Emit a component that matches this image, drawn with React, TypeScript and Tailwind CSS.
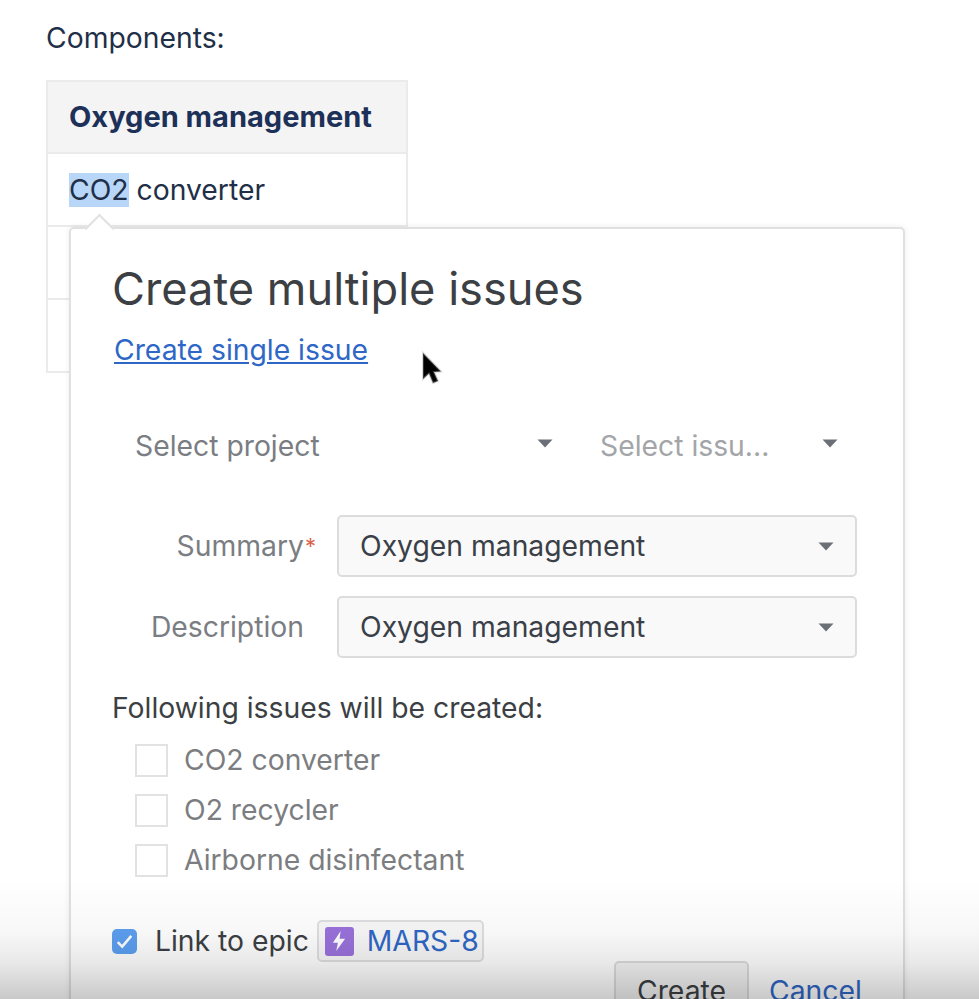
const font = { fontFamily: "Inter, Roboto, 'Noto Sans', sans-serif" };

function Caret({ color = "#6b6f76", lift }: { color?: string; lift?: boolean }) {
  return (
    <svg width="16" height="9" viewBox="0 0 16 9" className={lift ? "shrink-0 -mt-[5px]" : "shrink-0"}>
      <path d="M0.5 0.5H15.5L8 8.5Z" fill={color} />
    </svg>
  );
}

function MappedSelect({ label, star, pad }: { label: string; star?: boolean; pad: string }) {
  return (
    <div className="flex h-[62px] items-center">
      <div className={`w-[266px] shrink-0 text-right text-[#7a7d82] ${pad}`}>
        {label}
        {star && <span className="ml-[1px] text-[22px] align-top text-[#d9664f]">*</span>}
      </div>
      <div className="flex h-[62px] w-[520px] items-center justify-between rounded-[5px] border-2 border-[#dcdcdc] bg-[#f9f9f9] pl-[21px] pr-[21px] text-[#3a4048]">
        <span>Oxygen management</span>
        <Caret />
      </div>
    </div>
  );
}

function Issue({ text }: { text: string }) {
  return (
    <div className="flex h-[50px] items-center gap-[16px] text-[#7b7d80]">
      <span className="h-[33px] w-[33px] border-2 border-[#e2e2e2] bg-white" />
      <span>{text}</span>
    </div>
  );
}

export default function App() {
  return (
    <div style={font} className="relative h-[999px] w-[979px] overflow-hidden bg-white text-[28.3px] leading-[34px] text-[#22304a]">
      <div className="pl-[46px] pt-[21px] text-[#1f2f48]">Components:</div>
      <div className="ml-[46px] mt-[25px] w-[362px] border-2 border-[#ebebeb]">
        <div className="flex h-[72px] items-center border-b-2 border-[#ebebeb] bg-[#f4f4f4] pl-[21px] text-[29px] font-bold text-[#1d3058]">
          Oxygen management
        </div>
        <div className="flex h-[73px] items-center border-b-2 border-[#ebebeb] pl-[21px] text-[#1f2f48]">
          <span className="bg-[#b8d6f8]">CO2</span>&nbsp;converter
        </div>
        <div className="h-[73px] border-b-2 border-[#ebebeb]" />
        <div className="h-[71px]" />
      </div>

      <div className="absolute left-[69px] top-[227px] h-[800px] w-[836px] rounded-[5px] border-2 border-[#e0e0e0] bg-white pl-[41px] shadow-[0_0_6px_rgba(0,0,0,0.08)]">
        <div className="absolute -top-[11px] left-[18px] h-[21px] w-[21px] rotate-45 border-l-2 border-t-2 border-[#e0e0e0] bg-white" />
        <h1 className="relative pt-[32px] text-[45.2px] font-normal leading-[56px] text-[#3c3f43]">Create multiple issues</h1>
        <a className="relative mt-[16px] ml-[2px] block w-fit text-[#2f67c6] underline underline-offset-2">Create single issue</a>

        <div className="mt-[62px] flex h-[34px] items-center text-[#7a7d82]">
          <span className="ml-[23px] w-[402px]">Select project</span>
          <Caret lift />
          <span className="ml-[47px] w-[222px] text-[#a3a5a8]">Select issu...</span>
          <Caret lift />
        </div>

        <div className="-ml-[41px] mt-[52px] flex flex-col gap-[19px]">
          <MappedSelect label="Summary" star pad="pr-[21px]" />
          <MappedSelect label="Description" pad="pr-[33px]" />
        </div>

        <div className="mt-[33px] text-[#3c3f43]">Following issues will be created:</div>
        <div className="ml-[23px] mt-[10px]">
          <Issue text="CO2 converter" />
          <Issue text="O2 recycler" />
          <Issue text="Airborne disinfectant" />
        </div>

        <div className="mt-[35px] flex h-[42px] items-center text-[#3c3f43]">
          <span className="flex h-[25px] w-[25px] items-center justify-center rounded-[5px] bg-[#5c9ff0]">
            <svg width="17" height="15" viewBox="0 0 15 13" fill="none">
              <path d="M1.5 7L5.5 11L13.5 1.5" stroke="white" strokeWidth="2.2" />
            </svg>
          </span>
          <span className="ml-[18px]">Link to epic</span>
          <span className="ml-[8px] flex h-[42px] items-center rounded-[5px] border-2 border-[#dfdfe2] bg-[#f8f8f9] pl-[6px] pr-[3px] text-[#2f67c6]">
            <span className="flex h-[29px] w-[29px] items-center justify-center rounded-[3px] bg-[#9a72dc]">
              <svg width="14" height="20" viewBox="0 0 12 18">
                <path d="M7.5 0L0.5 10.5H5L3.5 18L11.5 7H6.5Z" fill="white" />
              </svg>
            </span>
            <span className="ml-[13px]">MARS-8</span>
          </span>
        </div>

        <div className="-mt-[1px] ml-[502px] flex items-start gap-[20px]">
          <span className="flex h-[60px] w-[135px] justify-center rounded-[5px] border-2 border-[#dcdcdc] bg-[#f4f4f4] pt-[11px] text-[#3c3f43]">Create</span>
          <span className="pt-[13px] text-[#2f67c6]">Cancel</span>
        </div>
      </div>

      <svg width="26" height="40" viewBox="0 0 26 40" className="absolute left-[419px] top-[349px]">
        <path d="M4 4V30L10 24.5L14 34L19 32L15 23L22 22.5Z" fill="#000" stroke="#999" strokeOpacity="0.35" strokeWidth="2" />
      </svg>

      <div className="pointer-events-none absolute inset-x-0 bottom-0 h-[120px] bg-[linear-gradient(to_bottom,rgba(0,0,0,0)_0%,rgba(0,0,0,0.03)_45%,rgba(0,0,0,0.09)_70%,rgba(0,0,0,0.21)_100%)]" />
    </div>
  );
}
